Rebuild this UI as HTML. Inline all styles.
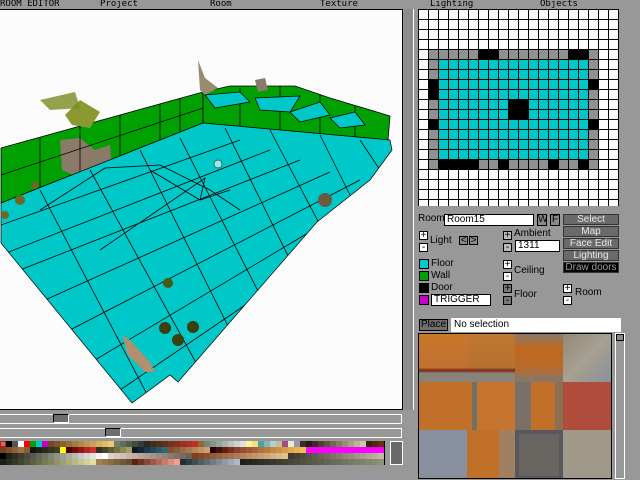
<!DOCTYPE html>
<html><head><meta charset="utf-8"><style>
*{margin:0;padding:0;box-sizing:border-box}
body{width:640px;height:480px;background:#989898;position:relative;overflow:hidden;font-family:"DejaVu Sans Mono","Liberation Mono",monospace;font-size:9px;color:#000}
.a{position:absolute}
.t{position:absolute;font-size:10px;line-height:10px;font-family:"Liberation Sans",sans-serif}
.inp{position:absolute;background:#fff;border:1px solid #000;font-size:10px;line-height:9px;padding-left:2px;font-family:"Liberation Sans",sans-serif}
.pb{position:absolute;width:9px;height:9px;background:#fff;border:1px solid #000;font-size:10px;line-height:7px;text-align:center;font-family:"Liberation Sans",sans-serif}
.btn{position:absolute;left:563px;width:56px;height:11px;background:#6a6a6a;border:1px solid #333;color:#e8e8e8;font-size:10px;line-height:9px;text-align:center;font-family:"Liberation Sans",sans-serif}
.sw{position:absolute;left:419px;width:10px;height:10px;border:1px solid #000}
</style></head><body>
<div class="a" style="left:0;top:0;font-size:9px;line-height:9px">ROOM EDITOR</div>
<div class="a" style="left:100px;top:0;line-height:9px">Project</div>
<div class="a" style="left:210px;top:0;line-height:9px">Room</div>
<div class="a" style="left:320px;top:0;line-height:9px">Texture</div>
<div class="a" style="left:430px;top:0;line-height:9px">Lighting</div>
<div class="a" style="left:540px;top:0;line-height:9px">Objects</div>

<!-- viewport -->
<div class="a" style="left:0;top:9px;width:403px;height:401px;background:#fcfcfc;border:1px solid #000;border-left:none"></div>
<svg class="a" style="left:0;top:10px" width="402" height="399" viewBox="0 10 402 399">
<defs><clipPath id="fc"><polygon points="1,203 203,123 390,140 392,150 370,180 317,222 178,382 170,375 132,403 1,243"/></clipPath></defs>
<polygon points="1,148 203,92 203,123 1,203" fill="#00a000" stroke="#000" stroke-width="0.8"/>
<polygon points="203,92 230,86 295,86 330,98 390,116 388,140 203,123" fill="#00a000" stroke="#000" stroke-width="0.8"/>
<polygon points="198,60 205,78 218,88 205,95 200,90" fill="#9a8a70"/>
<polygon points="60,140 80,138 95,150 110,145 112,165 100,175 80,178 62,170" fill="#8a7a68"/>
<polygon points="65,115 80,100 100,112 90,128 72,125" fill="#8a9a30"/>
<polygon points="40,100 75,92 80,108 50,110" fill="#7a8a20" opacity=".8"/>
<polygon points="255,80 265,78 268,90 258,92" fill="#8a7a68"/>
<g stroke="#000" stroke-width="0.8" fill="none">
<line x1="40" y1="137" x2="40" y2="192"/><line x1="80" y1="126" x2="80" y2="176"/><line x1="120" y1="115" x2="120" y2="160"/><line x1="160" y1="104" x2="160" y2="140"/><line x1="180" y1="98" x2="180" y2="132"/>
<line x1="1" y1="175" x2="203" y2="108"/><line x1="240" y1="88" x2="240" y2="127"/><line x1="280" y1="86" x2="280" y2="131"/><line x1="320" y1="95" x2="320" y2="134"/><line x1="355" y1="106" x2="355" y2="137"/>
</g>
<polygon points="205,95 240,92 250,102 215,108" fill="#00c8c8" stroke="#000" stroke-width=".7"/>
<polygon points="255,98 300,96 290,112 260,110" fill="#00c8c8" stroke="#000" stroke-width=".7"/>
<polygon points="330,118 355,112 365,125 340,128" fill="#00c8c8" stroke="#000" stroke-width=".7"/>
<polygon points="290,112 320,102 330,115 300,122" fill="#00c8c8" stroke="#000" stroke-width=".7"/>
<polygon points="1,203 203,123 390,140 392,150 370,180 317,222 178,382 170,375 132,403 1,243" fill="#00c8c8"/>
<g clip-path="url(#fc)" stroke="#000" stroke-width="0.8" fill="none">
<line x1="1" y1="225" x2="240" y2="140"/><line x1="1" y1="255" x2="270" y2="150"/><line x1="20" y1="270" x2="300" y2="160"/><line x1="45" y1="300" x2="330" y2="172"/><line x1="70" y1="330" x2="360" y2="180"/><line x1="95" y1="360" x2="380" y2="190"/><line x1="120" y1="390" x2="400" y2="200"/>
<line x1="40" y1="190" x2="150" y2="400"/><line x1="90" y1="170" x2="200" y2="370"/><line x1="140" y1="150" x2="230" y2="330"/><line x1="180" y1="138" x2="260" y2="295"/><line x1="225" y1="128" x2="290" y2="260"/><line x1="270" y1="130" x2="320" y2="225"/><line x1="320" y1="135" x2="350" y2="195"/><line x1="360" y1="140" x2="380" y2="170"/>
<polyline points="40,210 105,168 160,165 210,190 240,210"/><polyline points="100,250 205,178 200,200"/><polyline points="150,170 200,200 230,190"/>
</g>
<polygon points="1,203 203,123 390,140 392,150 370,180 317,222 178,382 170,375 132,403 1,243" fill="none" stroke="#000" stroke-width=".7"/>
<polygon points="122,335 130,340 150,362 155,372 145,372 128,355" fill="#b09070"/>
<circle cx="165" cy="328" r="6" fill="#3a4010"/><circle cx="193" cy="327" r="6" fill="#3a4010"/><circle cx="178" cy="340" r="6" fill="#3a4010"/><circle cx="168" cy="283" r="5" fill="#4a5a10"/>
<circle cx="20" cy="200" r="5" fill="#6a6a20"/><circle cx="35" cy="185" r="4" fill="#6a6a20"/><circle cx="325" cy="200" r="7" fill="#6a5a40"/><circle cx="5" cy="215" r="4" fill="#6a6a20"/>
<circle cx="218" cy="164" r="4" fill="#a0e8e8" stroke="#000" stroke-width=".5"/>
</svg>

<!-- vertical scrollbar -->
<div class="a" style="left:404px;top:9px;width:10px;height:401px;background:#8c8c8c;border-right:1px solid #fff"></div>
<!-- horizontal scrollbars -->
<div class="a" style="left:0;top:414px;width:402px;height:10px;background:#989898;border:1px solid #fff;border-left:none"></div>
<div class="a" style="left:53px;top:414px;width:16px;height:9px;background:#6e6e6e;border:1px solid #000;border-right-color:#fff;border-bottom-color:#fff"></div>
<div class="a" style="left:0;top:428px;width:402px;height:10px;background:#989898;border:1px solid #fff;border-left:none"></div>
<div class="a" style="left:105px;top:428px;width:16px;height:9px;background:#6e6e6e;border:1px solid #000;border-right-color:#fff;border-bottom-color:#fff"></div>
<div class="a" style="left:390px;top:441px;width:13px;height:24px;background:#6a6a6a;border:1px solid #fff"></div>
<div id="pal" class="a" style="left:0;top:441px;width:385px;height:24px;background:#000"></div>

<!-- map grid -->
<div id="grid" class="a" style="left:418px;top:9px;width:201px;height:197px;overflow:hidden;background-color:#fcfcfc;background-image:linear-gradient(90deg,#000 1px,transparent 1px),linear-gradient(#000 1px,transparent 1px);background-size:10px 10px;border-right:1px solid #000"></div>

<!-- controls -->
<div class="t" style="left:418px;top:214px">Room:</div>
<div class="inp" style="left:444px;top:214px;width:90px;height:12px">Room15</div>
<div class="a" style="left:537px;top:214px;width:10px;height:12px;background:#8a8a8a;border:1px solid #000;font-size:10px;line-height:10px;text-align:center;font-family:'Liberation Sans'">W</div>
<div class="a" style="left:550px;top:214px;width:10px;height:12px;background:#8a8a8a;border:1px solid #000;font-size:10px;line-height:10px;text-align:center;font-family:'Liberation Sans'">F</div>
<div class="btn" style="top:214px">Select</div>
<div class="btn" style="top:226px">Map</div>
<div class="btn" style="top:238px">Face Edit</div>
<div class="btn" style="top:250px">Lighting</div>
<div class="btn" style="top:262px;background:#000;color:#999">Draw doors</div>

<div class="pb" style="left:419px;top:231px">+</div>
<div class="pb" style="left:419px;top:243px">-</div>
<div class="t" style="left:430px;top:236px">Light</div>
<div class="pb" style="left:459px;top:236px;background:#8a8a8a">&lt;</div>
<div class="pb" style="left:469px;top:236px;background:#8a8a8a">&gt;</div>
<div class="pb" style="left:503px;top:231px;background:#bbb">+</div>
<div class="pb" style="left:503px;top:243px;background:#bbb">-</div>
<div class="t" style="left:514px;top:229px">Ambient</div>
<div class="inp" style="left:515px;top:240px;width:45px;height:12px">1311</div>

<div class="sw" style="top:259px;background:#00c8c8"></div><div class="t" style="left:431px;top:259px">Floor</div>
<div class="sw" style="top:271px;background:#00a000"></div><div class="t" style="left:431px;top:271px">Wall</div>
<div class="sw" style="top:283px;background:#000"></div><div class="t" style="left:431px;top:283px">Door</div>
<div class="sw" style="top:295px;background:#c800c8"></div>
<div class="inp" style="left:431px;top:294px;width:60px;height:12px">TRIGGER</div>
<div class="pb" style="left:503px;top:260px">+</div>
<div class="pb" style="left:503px;top:272px">-</div>
<div class="t" style="left:514px;top:266px">Ceiling</div>
<div class="pb" style="left:503px;top:284px;background:#777">+</div>
<div class="pb" style="left:503px;top:296px;background:#777">-</div>
<div class="t" style="left:514px;top:290px">Floor</div>
<div class="pb" style="left:563px;top:284px">+</div>
<div class="pb" style="left:563px;top:296px">-</div>
<div class="t" style="left:575px;top:288px">Room</div>

<div class="a" style="left:419px;top:319px;width:29px;height:12px;background:#6e6e6e;border:1px solid #000;font-size:10px;line-height:10px;text-align:center;font-family:'Liberation Sans'">Place</div>
<div class="inp" style="left:451px;top:318px;width:170px;height:14px;line-height:12px;border-color:#fff">No selection</div>

<!-- textures -->
<div class="a" style="left:418px;top:333px;width:194px;height:146px;border:1px solid #000;background:#000;overflow:hidden">
<div class="a" style="left:0;top:0;width:48px;height:48px;background:linear-gradient(#c87828 0,#c07030 70%,#7a2818 76%,#8a8478 82%)"></div>
<div class="a" style="left:48px;top:0;width:48px;height:48px;background:linear-gradient(#c07830 0,#b87030 70%,#7a2818 76%,#8a8478 82%)"></div>
<div class="a" style="left:96px;top:0;width:48px;height:48px;background:linear-gradient(#8a7a68,#c06820 30%,#b86a28 70%,#807870)"></div>
<div class="a" style="left:144px;top:0;width:48px;height:48px;background:linear-gradient(135deg,#908878,#a8a090 50%,#8890a0)"></div>
<div class="a" style="left:0;top:48px;width:48px;height:48px;background:#c07028"></div>
<div class="a" style="left:48px;top:48px;width:48px;height:48px;background:linear-gradient(90deg,#c07028 0,#c07028 5px,#707068 5px,#707068 10px,#c57530 10px)"></div>
<div class="a" style="left:96px;top:48px;width:48px;height:48px;background:linear-gradient(90deg,#7a7068 0,#7a7068 16px,#c07028 16px,#c07028 40px,#8a7050 40px)"></div>
<div class="a" style="left:144px;top:48px;width:48px;height:48px;background:#b04c3c"></div>
<div class="a" style="left:0;top:96px;width:48px;height:50px;background:#8890a0"></div>
<div class="a" style="left:48px;top:96px;width:48px;height:50px;background:linear-gradient(90deg,#c07028 0,#c07028 32px,#a08060 32px)"></div>
<div class="a" style="left:96px;top:96px;width:48px;height:50px;background:#686460;border:4px solid #58585e"></div>
<div class="a" style="left:144px;top:96px;width:48px;height:50px;background:#a09888"></div>
</div>
<div class="a" style="left:615px;top:333px;width:10px;height:146px;background:#989898;border:1px solid #fff"></div>
<div class="a" style="left:616px;top:334px;width:8px;height:7px;background:#888;border:1px solid #000"></div>

<script>
function h(c){return[parseInt(c.substr(1,2),16),parseInt(c.substr(3,2),16),parseInt(c.substr(5,2),16)]}
function seg(n,a,b){var r=[],A=h(a),B=h(b);for(var i=0;i<n;i++){var t=n>1?i/(n-1):0;r.push('rgb('+A.map(function(v,k){return Math.round(v+(B[k]-v)*t)}).join(',')+')')}return r}
function row(s){var r=[];s.forEach(function(x){if(typeof x=='string')r.push(x);else r=r.concat(seg(x[0],x[1],x[2]))});return r}
var rows=[
row(['#888888','#000000','#555555','#ffffff','#ff0000','#00a000','#00c8c8','#c800c8',[11,'#704820','#f0c870'],[6,'#708068','#282828'],[8,'#403018','#c03020'],'#906830',[7,'#708878','#e0e0e0'],'#f8f890','#f0e080',[3,'#50a0a0','#b0d0d0'],'#c0c090','#a04890','#e0f0d0','#a090a8','#303028',[10,'#2a1810','#d0c8a8'],[3,'#402010','#603018']]),
row([[4,'#704020','#a07040'],'#806030',[5,'#101810','#404020'],'#ffff00',[5,'#500000','#d03030'],[6,'#303020','#a0a060'],[6,'#101828','#306878'],[7,'#805030','#d0a070'],[4,'#200000','#803020'],[12,'#904030','#f0c050'],[13,'#ff00ff','#ff00ff']]),
row(['#000000',[17,'#202018','#ffffff'],[14,'#e0d0c8','#706058'],[16,'#804020','#e0c090'],[16,'#403830','#c0b8a8']]),
row([[16,'#182010','#e0e0a0'],[6,'#a08050','#605030'],[8,'#602010','#f0a090'],[10,'#203030','#b0b8c8'],[24,'#202018','#909078']])];
var p=document.getElementById('pal'),s='';
rows.forEach(function(r,y){for(var x=0;x<64;x++){s+='<div class="a" style="left:'+(x*6)+'px;top:'+(y*6)+'px;width:6px;height:6px;background:'+(r[x]||'#444')+(x==0&&y==0?';border:1px solid #f00':'')+'"></div>'}});
p.innerHTML=s;
var g=document.getElementById('grid'),q='';
function cell(c,r,col){q+='<div class="a" style="left:'+(c*10+1)+'px;top:'+(r*10+1)+'px;width:9px;height:9px;background:'+col+'"></div>'}
for(var c=1;c<=17;c++){cell(c,4,'#909090');cell(c,15,'#909090')}
for(var r=5;r<=14;r++){cell(1,r,'#909090');cell(17,r,'#909090');for(var c=2;c<=16;c++)cell(c,r,'#00c8c8')}
[[6,4],[7,4],[15,4],[16,4],[2,15],[3,15],[4,15],[5,15],[8,15],[13,15],[16,15],[1,7],[1,8],[1,11],[17,7],[17,11],[9,9],[10,9],[9,10],[10,10]].forEach(function(a){cell(a[0],a[1],'#000')});
g.innerHTML=q;
</script>
</body></html>
